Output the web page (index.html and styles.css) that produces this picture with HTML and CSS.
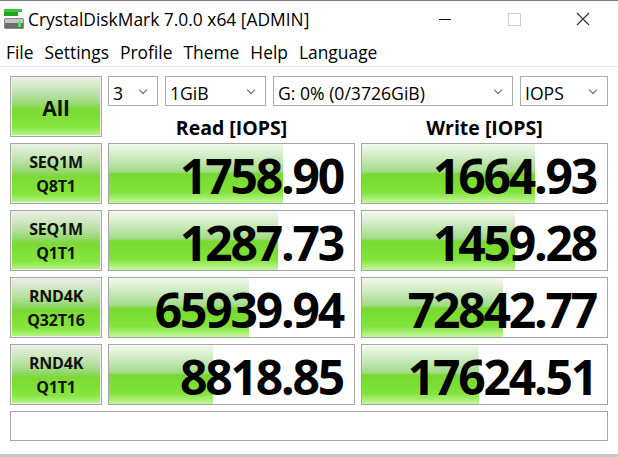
FILE: index.html
```html
<!DOCTYPE html>
<html lang="en">
<head>
    <meta charset="UTF-8">
    <title>CrystalDiskMark 7.0.0 x64 [ADMIN]</title>
    <link rel="stylesheet" href="styles.css">
</head>
<body>
<div class="window">
    <div class="titlebar">
        <svg class="app-icon" width="22" height="22" viewBox="0 0 22 22">
            <rect x="1" y="1" width="18" height="3" fill="#3cc43c"/>
            <rect x="1" y="4" width="14" height="4" fill="#1fa51f"/>
            <rect x="1" y="10" width="20" height="11" rx="1.5" fill="#8a8a8a"/>
            <rect x="2" y="11" width="18" height="4" fill="#c4c4c4"/>
            <rect x="2" y="15" width="18" height="5" fill="#6e6e6e"/>
            <rect x="15" y="14" width="3" height="5" fill="#4ee04e"/>
        </svg>
        <span class="title">CrystalDiskMark 7.0.0 x64 [ADMIN]</span>
        <div class="controls">
            <span class="ctl ctl-min"></span>
            <span class="ctl ctl-max"></span>
            <svg class="ctl ctl-close" width="14" height="14" viewBox="0 0 14 14">
                <path d="M1 1L13 13M13 1L1 13" stroke="#333" stroke-width="1.1" fill="none"/>
            </svg>
        </div>
    </div>
    <div class="menubar">
        <span>File</span>
        <span>Settings</span>
        <span>Profile</span>
        <span>Theme</span>
        <span>Help</span>
        <span>Language</span>
    </div>

    <div class="main">
        <div class="btn btn-all">All</div>
        <div class="top-right">
            <div class="selects">
                <div class="select s-count">3</div>
                <div class="select s-size">1GiB</div>
                <div class="select s-drive">G: 0% (0/3726GiB)</div>
                <div class="select s-unit">IOPS</div>
            </div>
            <div class="heads">
                <div class="head">Read [IOPS]</div>
                <div class="head">Write [IOPS]</div>
            </div>
        </div>

        <div class="btn btn-test">SEQ1M<br>Q8T1</div>
        <div class="result"><div class="fill" style="width:174px"></div><span>1758.90</span></div>
        <div class="result"><div class="fill" style="width:173px"></div><span>1664.93</span></div>

        <div class="btn btn-test">SEQ1M<br>Q1T1</div>
        <div class="result"><div class="fill" style="width:169px"></div><span>1287.73</span></div>
        <div class="result"><div class="fill" style="width:153px"></div><span>1459.28</span></div>

        <div class="btn btn-test">RND4K<br>Q32T16</div>
        <div class="result"><div class="fill" style="width:140px"></div><span>65939.94</span></div>
        <div class="result"><div class="fill" style="width:141px"></div><span>72842.77</span></div>

        <div class="btn btn-test">RND4K<br>Q1T1</div>
        <div class="result"><div class="fill" style="width:104px"></div><span>8818.85</span></div>
        <div class="result"><div class="fill" style="width:117px"></div><span>17624.51</span></div>

        <div class="status"></div>
    </div>
</div>
</body>
</html>
```

FILE: styles.css
```css
html, body {
    margin: 0;
    padding: 0;
}
body {
    width: 618px;
    height: 457px;
    overflow: hidden;
    background: #fff;
    font-family: "Open Sans", "Noto Sans", sans-serif;
    color: #000;
}
.window {
    height: 457px;
    border-top: 1px solid #808080;
    border-bottom: 3px solid #c8c8c8;
    box-sizing: border-box;
    background: #fff;
}
/* title bar */
.titlebar {
    height: 36px;
    display: flex;
    align-items: center;
}
.app-icon {
    margin-left: 3px;
    margin-right: 3px;
}
.title {
    font-size: 17.4px;
    color: #000;
}
.controls {
    margin-left: auto;
    display: flex;
    align-items: center;
    height: 100%;
}
.ctl {
    display: block;
}
.ctl-min {
    width: 12px;
    height: 1px;
    background: #111;
    margin-right: 57px;
}
.ctl-max {
    width: 11px;
    height: 11px;
    border: 1px solid #cfcfcf;
    margin-right: 55px;
}
.ctl-close {
    margin-right: 28px;
}
/* menu */
.menubar {
    height: 29px;
    display: flex;
    align-items: center;
    border-bottom: 1px solid #e3e3e3;
    font-size: 17.4px;
    padding-left: 0.5px;
}
.menubar span {
    padding: 0 5.5px;
}
/* main grid */
.main {
    display: grid;
    grid-template-columns: 92px 247px 247px;
    grid-template-rows: 61px 61px 61px 61px 61px 30px;
    gap: 6px;
    padding: 9px 0 0 10px;
}
.btn {
    box-sizing: border-box;
    border: 1px solid #a6a6a6;
    box-shadow: inset 0 0 0 1px #f0f0f0;
    background: linear-gradient(to bottom, #eaf0e6 0%, #b9e1a6 30%, #92d767 48%, #7bdb33 55%, #86e63d 85%, #b9f48e 100%);
    display: flex;
    align-items: center;
    justify-content: center;
    text-align: center;
    font-weight: bold;
    color: #111;
}
.btn-all {
    font-size: 21px;
    padding-top: 2px;
}
.btn-test {
    font-size: 16px;
    line-height: 24px;
    letter-spacing: -0.2px;
}
.top-right {
    grid-column: 2 / 4;
    display: flex;
    flex-direction: column;
}
.selects {
    display: flex;
    gap: 7px;
    height: 30px;
}
.select {
    box-sizing: border-box;
    border: 1px solid #adadad;
    background: #fff;
    font-size: 17.6px;
    line-height: 28px;
    padding: 2px 0 0 4px;
    position: relative;
}
.select::after {
    content: "";
    position: absolute;
    right: 11px;
    top: 10px;
    width: 5px;
    height: 5px;
    border-right: 1px solid #606060;
    border-bottom: 1px solid #606060;
    transform: rotate(45deg);
}
.s-count { width: 50px; }
.s-size { width: 101px; }
.s-drive { width: 240px; }
.s-unit { width: 88px; }
.heads {
    display: flex;
    gap: 6px;
    flex: 1;
}
.head {
    width: 247px;
    text-align: center;
    font-weight: bold;
    font-size: 19.5px;
    line-height: 31px;
    padding-top: 6px;
}
.result {
    position: relative;
    box-sizing: border-box;
    border: 1px solid #a6a6a6;
    background: #fff;
    text-align: right;
}
.fill {
    position: absolute;
    left: 0;
    top: 0;
    bottom: 0;
    background: linear-gradient(to bottom, #f4faf1 0%, #c9e9bb 25%, #a2db88 47%, #76d92e 51%, #82e33b 82%, #c6f7a0 100%);
}
.result span {
    position: relative;
    display: block;
    font-weight: bold;
    font-size: 48px;
    line-height: 61px;
    letter-spacing: -2.2px;
    padding-right: 11px;
    padding-top: 1px;
    color: #000;
}
.status {
    grid-column: 1 / 4;
    box-sizing: border-box;
    border: 1px solid #a6a6a6;
    background: #fff;
}
```
